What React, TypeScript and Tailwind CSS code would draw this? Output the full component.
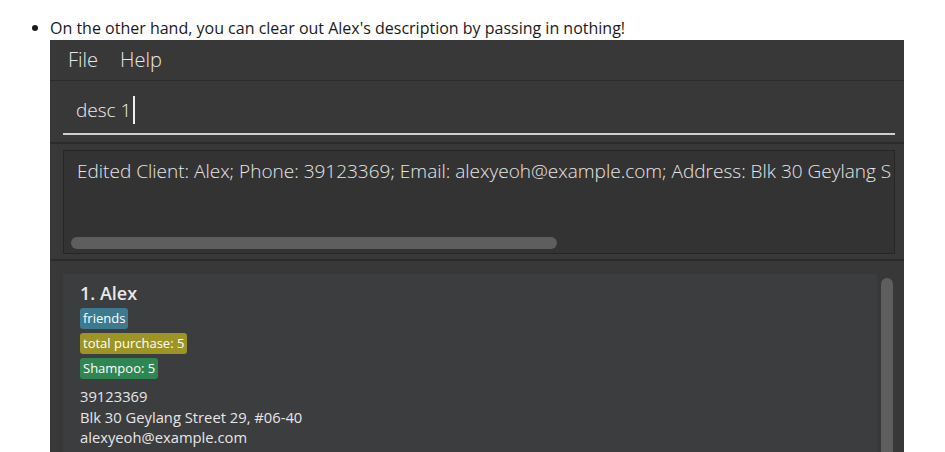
import React from "react";

const font = { fontFamily: "'Open Sans', 'Noto Sans', sans-serif" };

function Tag({ label, color }: { label: string; color: string }) {
  return (
    <span
      className={`inline-block rounded-[3px] px-[3px] text-[13px] leading-[21px] text-white ${color}`}
    >
      {label}
    </span>
  );
}

export default function App() {
  return (
    <div
      className="h-[452px] w-[945px] overflow-hidden bg-white font-['Open_Sans',sans-serif]"
    >
      <div className="flex h-[40px] items-center">
        <span className="ml-[32px] mt-[16px] h-[6px] w-[6px] rounded-full bg-[#1a1a1a]" />
        <p className="ml-[12px] mt-[16px] text-[16px] leading-[20px] text-[#1a1a1a]">
          On the other hand, you can clear out Alex's description by passing in nothing!
        </p>
      </div>

      <div className="ml-[50px] w-[854px] bg-[#383838]">
        <div className="flex h-[41px] items-center gap-[22px] border-b border-[#2c2c2c] pl-[18px] text-[20px] font-light text-[#e8e8e8]">
          <span>File</span>
          <span>Help</span>
        </div>

        <div className="pl-[13px] pr-[9px]">
          <div className="flex h-[54px] items-center border-b-2 border-[#cfcfcf] pl-[13px] pt-[6px]">
            <span className="text-[19px] font-light text-[#eeeeee]">desc 1</span>
            <span className="ml-[2px] h-[28px] w-[2px] bg-[#eeeeee]" />
          </div>
        </div>

        <div className="mt-[7px] h-[2px] bg-[#2b2b2b]" />

        <div className="pb-[5px] pl-[13px] pr-[9px] pt-[6px]">
          <div className="flex h-[104px] flex-col border border-[#262626] bg-[#333333]">
            <div className="overflow-hidden whitespace-nowrap pl-[13px] pt-[7px] text-[19px] font-light leading-[26px] text-[#e6e6e6]">
              Edited Client: Alex; Phone: 39123369; Email: alexyeoh@example.com; Address: Blk 30 Geylang S
            </div>
            <div className="mt-auto mb-[4px] ml-[7px] h-[12px] w-[486px] rounded-[6px] bg-[#5e5e5e]" />
          </div>
        </div>

        <div className="h-[2px] bg-[#2b2b2b]" />

        <div className="flex gap-[4px] pl-[13px] pr-[11px] pt-[13px]">
          <div className="flex-1 bg-[#3c3d3f] pb-[20px] pl-[17px] pt-[7px]" style={font}>
            <div className="text-[18px] font-semibold leading-[24px] text-[#e8e8e8]">1. Alex</div>
            <div className="mt-[3px] flex flex-col items-start gap-[4px]">
              <Tag label="friends" color="bg-[#3c7a90]" />
              <Tag label="total purchase: 5" color="bg-[#9c9424]" />
              <Tag label="Shampoo: 5" color="bg-[#2e8653]" />
            </div>
            <div className="mt-[7px] text-[14.75px] leading-[20.5px] text-[#e6e6e6]">
              <div>39123369</div>
              <div>Blk 30 Geylang Street 29, #06-40</div>
              <div>alexyeoh@example.com</div>
            </div>
          </div>
          <div className="mt-[4px] h-[200px] w-[12px] rounded-[6px] bg-[#5e5e5e]" />
        </div>
      </div>
    </div>
  );
}
